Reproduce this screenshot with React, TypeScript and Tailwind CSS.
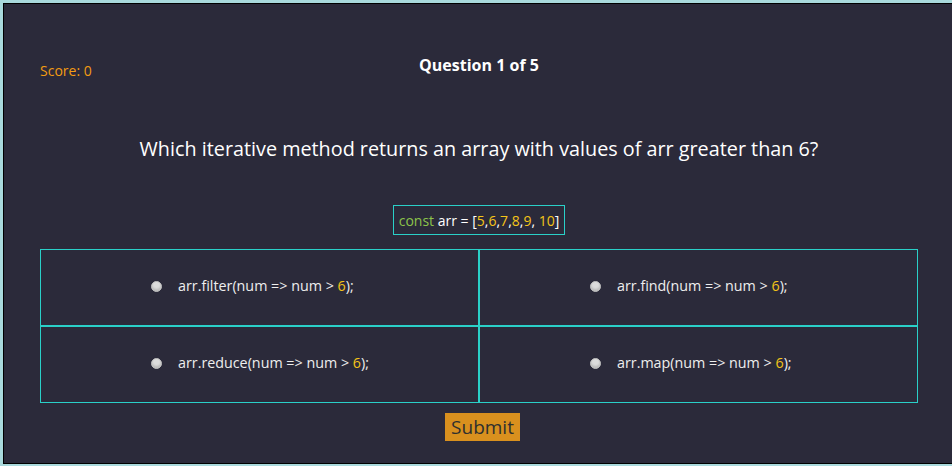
const options = [
  "arr.filter(num => num > ",
  "arr.find(num => num > ",
  "arr.reduce(num => num > ",
  "arr.map(num => num > ",
];

function Option({ text }: { text: string }) {
  return (
    <label className="h-[77px] border border-[#2ad0c8] flex items-center pl-[110px] pb-[3px] text-[14.3px] text-[#eeeeee]">
      <span className="w-[11px] h-[11px] rounded-full bg-[#dcdcdc] border border-[#bdbdbd] shadow-[inset_0_-2px_2px_rgba(0,0,0,0.15)]" />
      <span className="ml-[16px]">
        {text}
        <span className="text-[#f5c518]">6</span>);
      </span>
    </label>
  );
}

export default function App() {
  return (
    <div className="w-[952px] h-[466px] overflow-hidden bg-[#a9d9dc] pt-[3px] pl-[3px] font-['Open_Sans',sans-serif]">
      <div className="w-[960px] h-[461px] border border-black bg-[#2b2a3a]">
        <div className="w-[878px] ml-[36px] flex flex-col items-center">
          {/* Header */}
          <div className="w-full grid grid-cols-[1fr_auto_1fr] pt-[50px]">
            <div className="pt-[7px] text-[14px] leading-[20px] text-[#f39c12]">Score: 0</div>
            <h1 className="text-[16px] leading-[22px] font-bold text-white">Question 1 of 5</h1>
            <div />
          </div>

          <p className="mt-[54px] text-[19.8px] leading-[28px] text-white">
            Which iterative method returns an array with values of arr greater than 6?
          </p>

          <div className="mt-[42px] h-[30px] px-[5px] border border-[#2ad0c8] flex items-center text-[14px] text-white">
            <span className="text-[#8bc34a]">const</span>&nbsp;arr = [
            <span className="text-[#f5c518]">5</span>,<span className="text-[#f5c518]">6</span>,
            <span className="text-[#f5c518]">7</span>,<span className="text-[#f5c518]">8</span>,
            <span className="text-[#f5c518]">9</span>,&nbsp;<span className="text-[#f5c518]">10</span>]
          </div>

          {/* Answers */}
          <div className="mt-[14px] w-full grid grid-cols-2">
            {options.map((o) => (
              <Option key={o} text={o} />
            ))}
          </div>

          <button className="mt-[10px] ml-[7px] h-[28px] px-[6px] bg-[#d9901e] text-[19px] leading-[28px] text-[#2f2f2f]">
            Submit
          </button>
        </div>
      </div>
    </div>
  );
}
